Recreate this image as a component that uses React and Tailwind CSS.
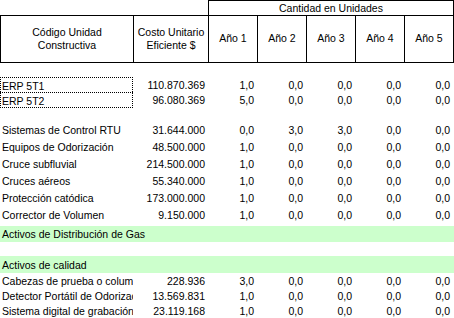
import React from "react";

const erpRows = [
    { name: "ERP 5T1", cost: "110.870.369", qty: ["1,0", "0,0", "0,0", "0,0", "0,0"] },
    { name: "ERP 5T2", cost: "96.080.369", qty: ["5,0", "0,0", "0,0", "0,0", "0,0"] }
];

const equipRows = [
    { name: "Sistemas de Control RTU", cost: "31.644.000", qty: ["0,0", "3,0", "3,0", "0,0", "0,0"] },
    { name: "Equipos de Odorización", cost: "48.500.000", qty: ["1,0", "0,0", "0,0", "0,0", "0,0"] },
    { name: "Cruce subfluvial", cost: "214.500.000", qty: ["1,0", "0,0", "0,0", "0,0", "0,0"] },
    { name: "Cruces aéreos", cost: "55.340.000", qty: ["1,0", "0,0", "0,0", "0,0", "0,0"] },
    { name: "Protección catódica", cost: "173.000.000", qty: ["1,0", "0,0", "0,0", "0,0", "0,0"] },
    { name: "Corrector de Volumen", cost: "9.150.000", qty: ["1,0", "0,0", "0,0", "0,0", "0,0"] }
];

const calidadRows = [
    { name: "Cabezas de prueba o columnas", cost: "228.936", qty: ["3,0", "0,0", "0,0", "0,0", "0,0"] },
    { name: "Detector Portátil de Odorización", cost: "13.569.831", qty: ["1,0", "0,0", "0,0", "0,0", "0,0"] },
    { name: "Sistema digital de grabación", cost: "23.119.168", qty: ["1,0", "0,0", "0,0", "0,0", "0,0"] }
];

const years = ["Año 1", "Año 2", "Año 3", "Año 4", "Año 5"];

function DataRow({ row, dotted, last, tall }) {
    const pad = tall ? "pt-[3px]" : "pt-[2px]";
    return (
        <div className={`flex ${tall ? "h-[17px]" : "h-[15px]"}`}>
            {/* ERP names sit in a dotted box */}
            <div
                className={
                    dotted
                        ? `w-[133px] overflow-hidden whitespace-nowrap pl-[1px] border-x border-t border-dotted border-black ${last ? "h-[16px] border-b" : ""}`
                        : "w-[133px] overflow-hidden whitespace-nowrap pl-[2px]"
                }
            >
                <div className={`${pad} leading-[13px]`}>{row.name}</div>
            </div>
            <div className={`w-[75px] pr-[3px] ${pad} text-right leading-[13px]`}>{row.cost}</div>
            {row.qty.map((q, i) => (
                <div key={i} className={`w-[49px] pr-[3px] ${pad} text-right leading-[13px]`}>
                    {q}
                </div>
            ))}
        </div>
    );
}

function GreenRow({ label, tall }) {
    return (
        <div
            className={`${tall ? "h-[17px] pt-[3px]" : "h-[16px] pt-[2px]"} w-[454px] bg-[#ccffcc] pl-[2px] leading-[13px] whitespace-nowrap`}
        >
            {label}
        </div>
    );
}

export default function App() {
    return (
        <div className="w-[454px] h-[318px] overflow-hidden bg-white text-black text-[10.5px] font-['Liberation_Sans',Arial,sans-serif]">
            {/* Top header */}
            <div className="flex h-[15px]">
                <div className="w-[208px]"></div>
                <div className="w-[246px] border-x border-t border-black text-center pt-[1px] leading-[13px]">
                    Cantidad en Unidades
                </div>
            </div>
            <div className="flex h-[48px] w-[454px] border-y border-black">
                <div className="w-[133px] border-l border-black flex flex-col items-center justify-center leading-[13px]">
                    <span>Código Unidad</span>
                    <span>Constructiva</span>
                </div>
                <div className="w-[75px] border-l border-black flex flex-col items-center justify-center leading-[13px]">
                    <span>Costo Unitario</span>
                    <span>Eficiente $</span>
                </div>
                {years.map((y, i) => (
                    <div
                        key={y}
                        className={`${i === 4 ? "w-[50px] border-x" : "w-[49px] border-l"} border-black flex items-center justify-center`}
                    >
                        {y}
                    </div>
                ))}
            </div>

            <div className="h-[14px]"></div>
            {erpRows.map((r, i) => (
                <DataRow key={r.name} row={r} dotted last={i === erpRows.length - 1} />
            ))}

            <div className="h-[14px]"></div>
            {equipRows.map((r) => (
                <DataRow key={r.name} row={r} tall />
            ))}

            <div className="h-[3px]"></div>
            <GreenRow label="Activos de Distribución de Gas" />
            <div className="h-[14px]"></div>
            <GreenRow label="Activos de calidad" tall />
            {calidadRows.map((r) => (
                <DataRow key={r.name} row={r} />
            ))}
        </div>
    );
}
